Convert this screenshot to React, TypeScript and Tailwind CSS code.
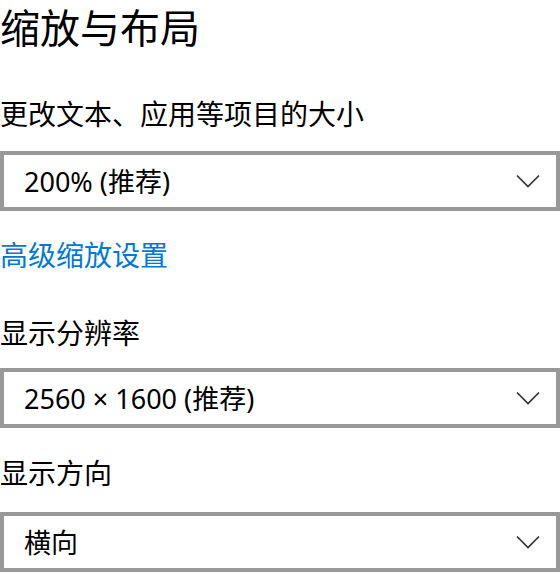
import React from 'react';

const FONT = { fontFamily: '"Noto Sans", "Noto Sans CJK SC", sans-serif' };

function Chevron() {
  return (
    <svg width="24" height="14" viewBox="0 0 24 14" fill="none" className="shrink-0">
      <path d="M1 1.5 L12 12.5 L23 1.5" stroke="#333" strokeWidth="1.7" />
    </svg>
  );
}

function Select({ value }: { value: string }) {
  return (
    <div className="flex h-[60px] w-full items-center justify-between border-4 border-[#999] bg-white pl-5 pr-[16px]">
      <span className="text-[27px] leading-none text-black">{value}</span>
      <Chevron />
    </div>
  );
}

export default function App() {
  return (
    <div className="h-[574px] w-[560px] overflow-hidden bg-white text-black" style={FONT}>
      <h1 className="mt-[4px] text-[40px] font-normal leading-[48px]">缩放与布局</h1>

      <p className="mt-[42px] text-[28px] leading-[40px]">更改文本、应用等项目的大小</p>
      <div className="mt-[17px]">
        <Select value="200% (推荐)" />
      </div>

      <a href="#" className="mt-[24px] block text-[28px] leading-[40px] text-[#0078d7]">
        高级缩放设置
      </a>

      <p className="mt-[38px] text-[28px] leading-[40px]">显示分辨率</p>
      <div className="mt-[15px]">
        <Select value="2560 × 1600 (推荐)" />
      </div>

      <p className="mt-[25px] text-[28px] leading-[40px]">显示方向</p>
      <div className="mt-[19px]">
        <Select value="横向" />
      </div>
    </div>
  );
}
